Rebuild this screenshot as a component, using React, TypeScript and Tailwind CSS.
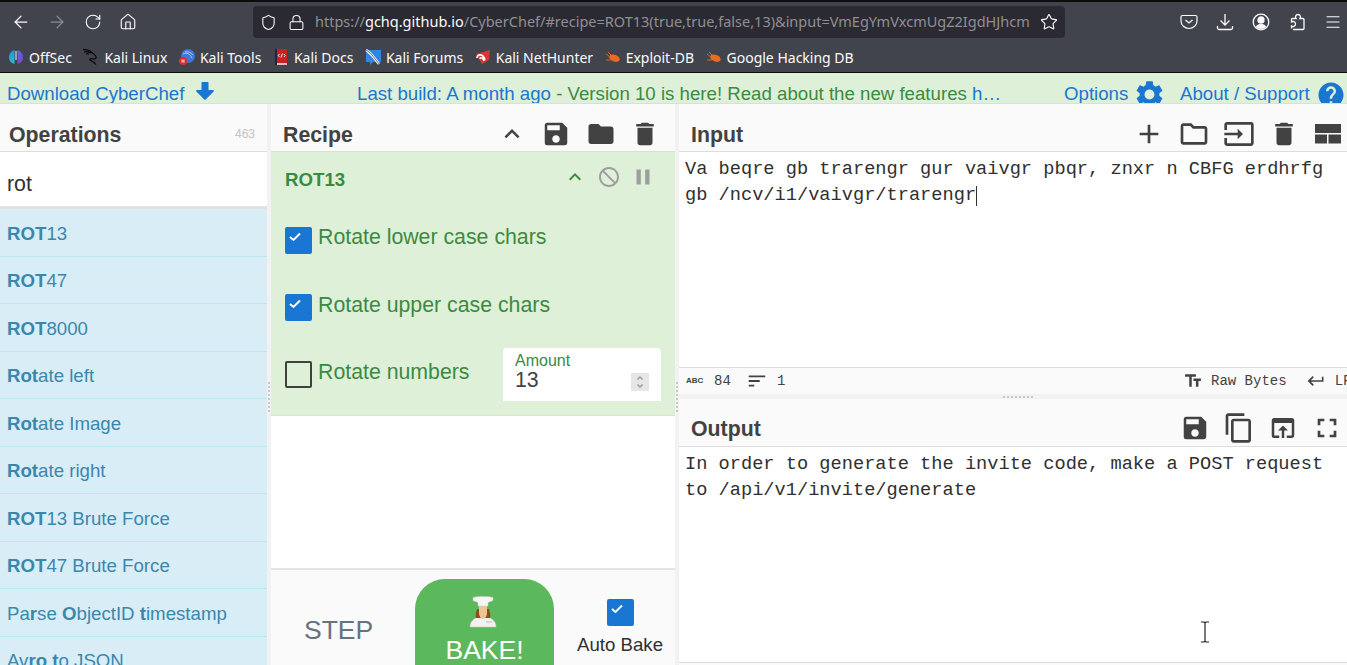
import { ArrowLeft, ArrowRight, Home, Lock, Menu, RotateCw, Shield, Star } from "lucide-react"
import {
    MdAdd, MdContentCopy, MdDelete, MdDoNotDisturb, MdFolder, MdFullscreen, MdHelp, MdInput,
    MdKeyboardArrowUp, MdKeyboardReturn, MdOpenInBrowser, MdOutlineFolder, MdPause, MdSave, MdSettings, MdSort, MdTextFields,
    MdUnfoldMore,
} from "react-icons/md"

const sans = "font-['Liberation_Sans',Arial,sans-serif]"
const mono = "font-['Liberation_Mono','Courier_New',monospace]"

const bookmarks = [
    { name: "OffSec", icon: "offsec" },
    { name: "Kali Linux", icon: "kali" },
    { name: "Kali Tools", icon: "tools" },
    { name: "Kali Docs", icon: "docs" },
    { name: "Kali Forums", icon: "forums" },
    { name: "Kali NetHunter", icon: "nethunter" },
    { name: "Exploit-DB", icon: "exploit" },
    { name: "Google Hacking DB", icon: "exploit" },
]

const operations: [string, string][][] = [
    [["ROT", "b"], ["13", ""]],
    [["ROT", "b"], ["47", ""]],
    [["ROT", "b"], ["8000", ""]],
    [["Rot", "b"], ["ate left", ""]],
    [["Rot", "b"], ["ate Image", ""]],
    [["Rot", "b"], ["ate right", ""]],
    [["ROT", "b"], ["13 Brute Force", ""]],
    [["ROT", "b"], ["47 Brute Force", ""]],
    [["Pa", ""], ["r", "b"], ["se ", ""], ["O", "b"], ["bjectID ", ""], ["t", "b"], ["imestamp", ""]],
    [["Av", ""], ["ro", "b"], [" ", ""], ["t", "b"], ["o JSON", ""]],
]

function Favicon({ kind }: { kind: string }) {
    if (kind === "offsec") {
        return (
            <svg width="16" height="16" viewBox="0 0 16 16">
                <defs>
                    <linearGradient id="offsecL" x1="0" y1="0" x2="0" y2="1"><stop offset="0" stopColor="#2a8fd8" /><stop offset="1" stopColor="#22c0c8" /></linearGradient>
                    <linearGradient id="offsecR" x1="0" y1="0" x2="0" y2="1"><stop offset="0" stopColor="#4a6fe0" /><stop offset="1" stopColor="#8a3fd0" /></linearGradient>
                </defs>
                <path d="M6.500 1C3 2 1 5 1 8.500s2 5.500 5.500 6.500z" fill="url(#offsecL)" />
                <path d="M9.500 1c3.500 1 5.500 4 5.500 7.500S13 14 9.500 15z" fill="url(#offsecR)" />
                <rect x="7.400" y="2" width="1.200" height="9" fill="#d8d8e0" />
            </svg>
        )
    }
    if (kind === "kali") {
        return (
            <svg width="16" height="16" viewBox="0 0 16 16" fill="none" stroke="#050505" strokeWidth="1.200">
                <path d="M0 .5c4 0 7 1 9 3s5 3 4 5.500-5-.5-6 1 3.500 2 6 5.500M1 3c3-1 5 0 7 1M3 5c1-.5 2-.5 3 0" />
            </svg>
        )
    }
    if (kind === "tools") {
        return (
            <svg width="16" height="16" viewBox="0 0 16 16">
                <circle cx="9" cy="7" r="7" fill="#3b78d8" />
                <path d="M4 5c4-2 7 0 9 4M6 3c3-1 6 1 8 3" stroke="#cfe2fa" strokeWidth="0.8" fill="none" />
                <circle cx="4" cy="12" r="4" fill="#e02b2b" />
                <rect x="2.600" y="10.500" width="1" height="3" fill="#fff" />
                <rect x="4.400" y="10.500" width="1" height="3" fill="#fff" />
            </svg>
        )
    }
    if (kind === "docs") {
        return (
            <svg width="16" height="16" viewBox="0 0 16 16">
                <rect x="2" y="0" width="12" height="14" fill="#c62222" />
                <rect x="2" y="14" width="12" height="2" fill="#e5b7b7" />
                <rect x="2" y="0" width="2" height="16" fill="#2a2238" />
                <path d="M6.500 5 5.300 6.500 6.500 8M11 5l1.200 1.500L11 8M9.500 4.500 8 8.500" stroke="#fff" strokeWidth="0.9" fill="none" />
            </svg>
        )
    }
    if (kind === "forums") {
        return (
            <svg width="16" height="16" viewBox="0 0 16 16">
                <path d="M1 1h15v12H8l-3 3v-3H1z" fill="#2f86e8" />
                <path d="M1 1c4 2 7 6 13 14" stroke="#f2f2f2" strokeWidth="2.600" fill="none" />
                <path d="M1 1c4 2 7 6 13 14" stroke="#222" strokeWidth="0.6" fill="none" />
            </svg>
        )
    }
    if (kind === "nethunter") {
        return (
            <svg width="16" height="16" viewBox="0 0 16 16">
                <path d="M1 5 15 1l-1 10-7 4z" fill="#d93636" />
                <path d="M2 9c0-4 6-5 8 2M5 10c0-2 3-2 4 2" stroke="#fff" strokeWidth="1.600" fill="none" />
            </svg>
        )
    }
    return (
        <svg width="16" height="16" viewBox="0 0 16 16">
            <ellipse cx="9.500" cy="9" rx="5.500" ry="3.400" fill="#ea6a1f" transform="rotate(20 9 9)" />
            <path d="M1 5 5 8M3 3l4 4M1 11h5" stroke="#ea6a1f" strokeWidth="0.9" />
        </svg>
    )
}

function Checkbox({ checked }: { checked: boolean }) {
    if (!checked) return <span className="block w-[27px] h-[27px] rounded-[2px] border-2 border-[#404040] shrink-0" />
    return (
        <span className="flex w-[27px] h-[27px] pl-[3px] pt-[3px] rounded-[2px] bg-[#1976d2] shrink-0">
            <svg width="14" height="14" viewBox="0 0 14 14" fill="none" stroke="white" strokeWidth="2"><path d="m2 7 3.500 3L12 3.500" /></svg>
        </span>
    )
}

function PaneTitle({ children }: { children: string }) {
    return <h2 className={`${sans} mt-[4px] text-[21.3px] font-bold text-[#424242] leading-none`}>{children}</h2>
}

function Chef() {
    return (
        <svg width="28" height="32" viewBox="0 0 28 32">
            <path d="M1 31c0-5 3-8 8-10h10c5 2 8 5 8 10z" fill="#f1f1f1" stroke="#c9c9c9" strokeWidth="0.5" />
            <path d="M8 13c-1 4-2 7-1 9h14c1-2 0-5-1-9z" fill="#8a4e1d" />
            <path d="M10 10h8v7c0 3-2 6-4 6s-4-3-4-6z" fill="#eec591" />
            <path d="M4 1.500c4-1.500 16-1.500 20 0v3l-5 2v3.500H9V6.500l-5-2z" fill="#f5f5f5" stroke="#cfcfcf" strokeWidth="0.5" />
            <path d="M17 26h6" stroke="#b8b8b8" />
        </svg>
    )
}

function Dots({ vertical }: { vertical?: boolean }) {
    return (
        <div className={`flex ${vertical ? "flex-col" : ""} gap-[2px]`}>
            {Array.from({ length: 8 }).map((_, i) => <span key={i} className="block w-[2px] h-[2px] bg-[#c8c8c8]" />)}
        </div>
    )
}

export default function App() {
    return (
        <div className={`${sans} w-[1347px] h-[665px] overflow-hidden flex flex-col bg-white`}>
            {/* browser chrome */}
            <div className="h-[2px] bg-[#0c0c0d]" />
            <div className="h-[36px] bg-[#42444d] flex items-center pt-[4px] text-[#fbfbfe]">
                <div className="flex items-center w-[253px] pl-[11px] gap-[16px]">
                    <ArrowLeft size={20} strokeWidth={1.5} />
                    <ArrowRight size={20} strokeWidth={1.5} className="text-[#8b8c93]" />
                    <RotateCw size={18} strokeWidth={1.5} className="ml-[1px]" />
                    <Home size={18} strokeWidth={1.5} className="ml-[1px]" />
                </div>
                <div className="w-[812px] h-[32px] rounded-[4px] bg-[#2b2a33] flex items-center pl-[7px] pr-[7px]">
                    <Shield size={17} strokeWidth={1.5} />
                    <Lock size={17} strokeWidth={1.5} className="ml-[11px]" />
                    <div className="ml-[10px] w-[718px] overflow-hidden whitespace-nowrap font-['Noto_Sans',sans-serif] text-[14.5px] text-[#8f8f95]">
                        https://<span className="text-[#fbfbfe]">gchq.github.io</span>/CyberChef/#recipe=ROT13(true,true,false,13)&amp;input=VmEgYmVxcmUgZ2IgdHJhcm
                    </div>
                    <Star size={18} strokeWidth={1.5} className="ml-auto" />
                </div>
                <div className="flex items-center ml-auto pr-[5px] gap-[18px]">
                    <svg width="18" height="18" viewBox="0 0 18 18" fill="none" stroke="#fbfbfe" strokeWidth="1.200"><path d="M2.500 2.500h13a1.500 1.500 0 0 1 1.500 1.500v4a8 7.500 0 0 1-16 0V4a1.500 1.500 0 0 1 1.500-1.500zM5.500 7 9 10 12.500 7" /></svg>
                    <svg width="18" height="18" viewBox="0 0 18 18" fill="none" stroke="#fbfbfe" strokeWidth="1.300"><path d="M9 1v11M4.500 7.500 9 12l4.500-4.500M1.500 13v2a1.500 1.500 0 0 0 1.500 1.500h12a1.500 1.500 0 0 0 1.500-1.500v-2" /></svg>
                    <svg width="18" height="18" viewBox="0 0 18 18" fill="none" stroke="#fbfbfe" strokeWidth="1.300"><circle cx="9" cy="9" r="7.800" /><circle cx="9" cy="7" r="3" fill="#fbfbfe" /><path d="M4 13.500c1-2 3-2.500 5-2.500s4 .5 5 2.500v.5a7 7 0 0 1-10 0z" fill="#fbfbfe" stroke="none" /></svg>
                    <svg width="18" height="18" viewBox="0 0 18 18" fill="none" stroke="#fbfbfe" strokeWidth="1.300"><path d="M5 16.500h10a1 1 0 0 0 1-1v-9a1 1 0 0 0-1-1h-3c.8-1 .8-4-2-4s-2.800 3-2 4H4.500a1 1 0 0 0-1 1V9c1-.8 4-.8 4 2s-3 2.800-4 2v2.500" /></svg>
                    <Menu size={18} strokeWidth={1.5} />
                </div>
            </div>
            <div className="h-[35px] bg-[#42444d] border-b border-[#0c0c0d] flex items-center pl-[8px] pt-[4px] gap-[11.5px] text-[#fbfbfe] font-['Noto_Sans',sans-serif] text-[14px]">
                {bookmarks.map((b) => (
                    <span key={b.name} className="flex items-center gap-[5px]">
                        <Favicon kind={b.icon} />
                        {b.name}
                    </span>
                ))}
            </div>

            {/* banner */}
            <div className="h-[31px] bg-[#dff0d8] border-b border-[#dddddd] overflow-hidden flex items-start pl-[7px] pt-[9px] text-[18.67px] leading-[24px] text-[#1976d2] shrink-0">
                <span className="flex items-start gap-[12px] w-[350px]">
                    Download CyberChef
                    <svg width="18" height="18" viewBox="0 0 18 18" fill="#1976d2"><path d="M6 0h6a.500.500 0 0 1 .500.500V8H17a1 1 0 0 1 .700 1.600L9.700 17.600a1 1 0 0 1-1.400 0L.300 9.600A1 1 0 0 1 1 8h4.500V.500A.500.500 0 0 1 6 0z" /></svg>
                </span>
                <span className="w-[707px] whitespace-nowrap">Last build: A month ago <span className="text-[#3c8a42]">- Version 10 is here! Read about the new features</span> h…</span>
                <span className="flex items-start gap-[5px] w-[116px]">Options <MdSettings size={33} className="-mt-[4px]" /></span>
                <span className="flex items-start gap-[6px] whitespace-nowrap">About / Support <MdHelp size={30} className="-mt-[2px]" /></span>
            </div>

            <div className="flex flex-1 min-h-0">
                {/* operations */}
                <div className="w-[267px] shrink-0 flex flex-col bg-white">
                    <div className="h-[48px] shrink-0 bg-[#fafafa] border-b border-[#dddddd] flex items-center justify-between pl-[9px] pr-[12px] pt-[12px]">
                        <PaneTitle>Operations</PaneTitle>
                        <span className="text-[12px] text-[#c4c4c4]">463</span>
                    </div>
                    <div className="h-[57px] shrink-0 bg-white border-b-[3px] border-[#e2e2e2] pl-[7px] pt-[12px] flex items-center text-[21.3px] text-[#303030]">rot</div>
                    <div className="flex flex-col">
                        {operations.map((op, i) => (
                            <div key={i} className="h-[47.5px] shrink-0 bg-[#d9edf7] border-b border-[#bce8f1] pl-[7px] pt-[3px] flex items-center text-[18.67px] text-[#3a87ad] whitespace-pre">
                                {op.map(([t, w], j) => w ? <b key={j}>{t}</b> : <span key={j}>{t}</span>)}
                            </div>
                        ))}
                    </div>
                </div>
                <div className="w-[4px] shrink-0 bg-[#f2f2f2] flex items-center justify-center pt-[25px]"><Dots vertical /></div>

                {/* recipe */}
                <div className="w-[404px] shrink-0 flex flex-col bg-white">
                    <div className="h-[48px] shrink-0 bg-[#fafafa] border-b border-[#dddddd] flex items-center pl-[12px] pr-[15px] pt-[12px] text-[#424242]">
                        <PaneTitle>Recipe</PaneTitle>
                        <div className="ml-auto flex items-center gap-[14.5px]">
                            <MdKeyboardArrowUp size={30} />
                            <MdSave size={30} />
                            <MdFolder size={30} />
                            <MdDelete size={30} />
                        </div>
                    </div>
                    <div className="h-[264px] shrink-0 bg-[#dff0d8] border-b border-[#d6e9c6] flex flex-col pl-[14px] pr-[14px] text-[#3c8a42] text-[21.3px]">
                        <div className="h-[55px] flex items-center shrink-0">
                            <b className="text-[18.67px]">ROT13</b>
                            <div className="ml-auto mr-[5px] flex items-center gap-[9.500px] -mt-[6px]">
                                <MdKeyboardArrowUp size={24} />
                                <MdDoNotDisturb size={24} className="text-[#9e9e9e]" />
                                <MdPause size={26} className="text-[#9e9e9e]" />
                            </div>
                        </div>
                        <div className="flex items-center gap-[6px] mt-[20px] h-[27px]"><Checkbox checked /><span className="-mt-[5px] leading-none">Rotate lower case chars</span></div>
                        <div className="flex items-center gap-[6px] mt-[40px] h-[27px]"><Checkbox checked /><span className="-mt-[4px] leading-none">Rotate upper case chars</span></div>
                        <div className="flex items-center mt-[27px]">
                            <div className="flex items-center gap-[6px] h-[53px] w-[218px]"><Checkbox checked={false} /><span className="-mt-[4px] leading-none">Rotate numbers</span></div>
                            <div className="w-[158px] h-[53px] bg-white rounded-t-[4px] pl-[12px] pr-[12px] pt-[5px] relative">
                                <div className="text-[16px] leading-[15px]">Amount</div>
                                <div className="text-[21.3px] leading-[25px] text-[#424242]">13</div>
                                <span className="absolute right-[12px] top-[25px] w-[18px] h-[18px] bg-[#e6e6ea] flex items-center justify-center text-[#9a9a9a]"><MdUnfoldMore size={16} /></span>
                            </div>
                        </div>
                    </div>
                    <div className="flex-1 bg-white" />
                    <div className="h-[97px] shrink-0 bg-[#fafafa] border-t-2 border-[#e4e4e4] flex items-start relative">
                        <span className="ml-[33px] mt-[47px] text-[26.5px] leading-none text-[#66737f]">STEP</span>
                        <div className="absolute left-[144px] top-[9px] w-[139px] h-[120px] rounded-[30px] bg-[#5cb85c] flex flex-col items-center text-white">
                            <div className="mt-[17px] mr-[4px]"><Chef /></div>
                            <span className="mt-[9px] text-[26.5px] leading-none">BAKE!</span>
                        </div>
                        <div className="absolute left-[306px] top-[29px] w-[86px] flex flex-col items-center text-[#303030] text-[18.67px]">
                            <Checkbox checked />
                            <span className="mt-[7px] whitespace-nowrap leading-[24px]">Auto Bake</span>
                        </div>
                    </div>
                </div>
                <div className="w-[4px] shrink-0 bg-[#f2f2f2] flex items-center justify-center pt-[25px]"><Dots vertical /></div>

                {/* input / output */}
                <div className="flex-1 min-w-0 flex flex-col bg-white text-[#424242]">
                    <div className="h-[48px] shrink-0 bg-[#fafafa] border-b border-[#dddddd] flex items-center pl-[12px] pt-[12px]">
                        <PaneTitle>Input</PaneTitle>
                        <div className="ml-auto flex items-center gap-[13px] pr-[6px]">
                            <MdAdd size={32} />
                            <MdOutlineFolder size={32} />
                            <MdInput size={32} />
                            <MdDelete size={30} className="ml-[1px]" />
                            <svg className="ml-[3px]" width="26" height="20" viewBox="0 0 26 20" fill="#424242"><rect x="0" y="0" width="26" height="9" /><rect x="0" y="10.500" width="12" height="9" /><rect x="13.500" y="10.500" width="12.500" height="9" /></svg>
                        </div>
                    </div>
                    <div className={`${mono} h-[215px] shrink-0 bg-white pl-[6px] pt-[4px] text-[18.67px] leading-[26px] text-[#303030] whitespace-pre`}>
                        {"Va beqre gb trarengr gur vaivgr pbqr, znxr n CBFG erdhrfg\ngb /ncv/i1/vaivgr/trarengr"}<span className="inline-block w-[1px] h-[20px] bg-[#303030] align-text-bottom" />
                    </div>
                    <div className={`${mono} h-[27px] shrink-0 bg-[#fafafa] border-t border-[#dddddd] flex items-center pl-[7px] text-[14px] text-[#424242] whitespace-nowrap overflow-hidden`}>
                        <span className={`${sans} text-[8px] font-bold w-[28px]`}>ABC</span>
                        <span className="w-[32px]">84</span>
                        <MdSort size={22} className="mr-[9px]" />
                        <span>1</span>
                        <div className="ml-auto flex items-center w-[164px] shrink-0">
                            <MdTextFields size={20} className="mr-[8px] shrink-0" />
                            <span className="mr-[19px]">Raw Bytes</span>
                            <MdKeyboardReturn size={20} className="mr-[9px] shrink-0" />
                            <span>LF</span>
                        </div>
                    </div>
                    <div className="h-[5px] shrink-0 bg-[#f2f2f2] flex items-center justify-center pl-[10px]"><Dots /></div>
                    <div className="h-[48px] shrink-0 bg-[#fafafa] border-b border-[#dddddd] flex items-center pl-[12px] pt-[10px]">
                        <PaneTitle>Output</PaneTitle>
                        <div className="ml-auto flex items-center gap-[13px] pr-[4px]">
                            <MdSave size={30} />
                            <MdContentCopy size={32} />
                            <MdOpenInBrowser size={30} />
                            <MdFullscreen size={32} />
                        </div>
                    </div>
                    <div className={`${mono} flex-1 bg-white pl-[6px] pt-[4px] text-[18.67px] leading-[26px] text-[#303030] whitespace-pre border-b border-[#dddddd] relative`}>
                        {"In order to generate the invite code, make a POST request\nto /api/v1/invite/generate"}
                        <svg className="absolute left-[521px] top-[174px]" width="10" height="22" viewBox="0 0 10 22" fill="none" stroke="#222" strokeWidth="1.200"><path d="M1 1h3l1 1 1-1h3M5 2v18M1 21h3l1-1 1 1h3" /></svg>
                    </div>
                    <div className="h-[2px] shrink-0 bg-[#fafafa]" />
                </div>
            </div>
        </div>
    )
}
